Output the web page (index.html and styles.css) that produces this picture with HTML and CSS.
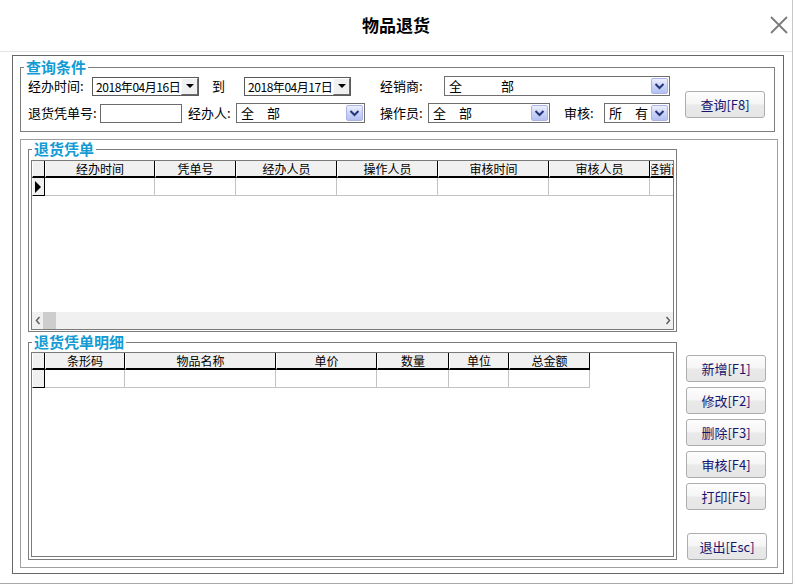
FILE: index.html
```html
<!DOCTYPE html>
<html lang="zh-CN">
<head>
<meta charset="utf-8">
<title>物品退货</title>
<link rel="stylesheet" href="styles.css">
</head>
<body>
<div class="window">
  <div class="titlebar">
    <span class="title">物品退货</span>
    <svg class="close" width="18" height="18" viewBox="0 0 18 18"><path d="M1 1 L17 17 M17 1 L1 17" stroke="#7b7b7b" stroke-width="1.8" fill="none"/></svg>
  </div>
  <div class="frame">
    <div class="group query">
      <span class="legend">查询条件</span>
      <div class="qrows">
        <div class="qrow">
          <span class="lbl l-time">经办时间:</span>
          <div class="date"><span class="dtext">2018年04月16日</span><span class="ddbtn"></span></div>
          <span class="lbl l-to">到</span>
          <div class="date"><span class="dtext">2018年04月17日</span><span class="ddbtn"></span></div>
          <span class="lbl l-dealer">经销商:</span>
          <div class="combo c-dealer"><span class="ctext">全　　　部</span><span class="cbtn"><svg width="11" height="8" viewBox="0 0 11 8"><path d="M1.5 2 L5.5 6 L9.5 2" stroke="#24367a" stroke-width="2" fill="none"/></svg></span></div>
        </div>
        <div class="qrow">
          <span class="lbl l-no">退货凭单号:</span>
          <div class="input"></div>
          <span class="lbl l-agent">经办人:</span>
          <div class="combo c-agent"><span class="ctext">全　部</span><span class="cbtn"><svg width="11" height="8" viewBox="0 0 11 8"><path d="M1.5 2 L5.5 6 L9.5 2" stroke="#24367a" stroke-width="2" fill="none"/></svg></span></div>
          <span class="lbl l-op">操作员:</span>
          <div class="combo c-op"><span class="ctext">全　部</span><span class="cbtn"><svg width="11" height="8" viewBox="0 0 11 8"><path d="M1.5 2 L5.5 6 L9.5 2" stroke="#24367a" stroke-width="2" fill="none"/></svg></span></div>
          <span class="lbl l-audit">审核:</span>
          <div class="combo c-audit"><span class="ctext">所　有</span><span class="cbtn"><svg width="11" height="8" viewBox="0 0 11 8"><path d="M1.5 2 L5.5 6 L9.5 2" stroke="#24367a" stroke-width="2" fill="none"/></svg></span></div>
        </div>
      </div>
      <button class="btn btn-query">查询[F8]</button>
    </div>

    <div class="panel">
      <div class="lists">
        <div class="group g1">
          <span class="legend">退货凭单</span>
          <div class="grid">
            <div class="ghead">
              <span class="hc w-ind"></span>
              <span class="hc w110">经办时间</span>
              <span class="hc w81">凭单号</span>
              <span class="hc w101">经办人员</span>
              <span class="hc w101">操作人员</span>
              <span class="hc w111">审核时间</span>
              <span class="hc w101">审核人员</span>
              <span class="hc w30">经销商</span>
            </div>
            <div class="grow">
              <span class="dc ind w-ind"><span class="tri"></span></span>
              <span class="dc w110"></span>
              <span class="dc w81"></span>
              <span class="dc w101"></span>
              <span class="dc w101"></span>
              <span class="dc w111"></span>
              <span class="dc w101"></span>
              <span class="dc w30"></span>
            </div>
            <div class="hscroll">
              <span class="arrow"><svg width="6" height="9" viewBox="0 0 6 9"><path d="M4.5 1 L1.5 4.5 L4.5 8" stroke="#606060" stroke-width="1.5" fill="none"/></svg></span>
              <span class="thumb"></span>
              <span class="track"></span>
              <span class="arrow"><svg width="6" height="9" viewBox="0 0 6 9"><path d="M1.5 1 L4.5 4.5 L1.5 8" stroke="#606060" stroke-width="1.5" fill="none"/></svg></span>
            </div>
          </div>
        </div>

        <div class="group g2">
          <span class="legend">退货凭单明细</span>
          <div class="grid">
            <div class="ghead">
              <span class="hc w-ind"></span>
              <span class="hc w80">条形码</span>
              <span class="hc w151">物品名称</span>
              <span class="hc w101">单价</span>
              <span class="hc w72">数量</span>
              <span class="hc w60">单位</span>
              <span class="hc w81">总金额</span>
            </div>
            <div class="grow">
              <span class="dc ind w-ind"></span>
              <span class="dc w80"></span>
              <span class="dc w151"></span>
              <span class="dc w101"></span>
              <span class="dc w72"></span>
              <span class="dc w60"></span>
              <span class="dc w81"></span>
            </div>
          </div>
        </div>
      </div>

      <div class="actions">
        <button class="btn">新增[F1]</button>
        <button class="btn">修改[F2]</button>
        <button class="btn">删除[F3]</button>
        <button class="btn">审核[F4]</button>
        <button class="btn">打印[F5]</button>
        <button class="btn btn-exit">退出[Esc]</button>
      </div>
    </div>
  </div>
</div>
</body>
</html>
```

FILE: styles.css
```css
* { box-sizing: border-box; }

body {
  margin: 0;
  background: #fff;
  font-family: "Noto Sans CJK SC", "Liberation Sans", sans-serif;
  font-size: 13px;
  color: #000;
}

.window {
  width: 793px;
  height: 584px;
  border-right: 1px solid #c8c8c8;
  border-bottom: 1px solid #a8a8a8;
}

.titlebar {
  height: 52px;
  border-bottom: 1px solid #e3e3e3;
  display: grid;
  grid-template-columns: 1fr auto 1fr;
  align-items: center;
}

.title {
  grid-column: 2;
  font-size: 17px;
  font-weight: bold;
  line-height: 20px;
  margin-bottom: 2px;
}

.close {
  grid-column: 3;
  justify-self: end;
  margin-right: 4px;
  margin-bottom: 1px;
}

.frame {
  margin: 3px 0 0 12px;
  width: 772px;
  height: 519px;
  border: 1px solid #666;
}

.group {
  position: relative;
  border: 1px solid #7d7d7d;
}

.legend {
  position: absolute;
  top: -9px;
  left: 3px;
  padding: 0 2px;
  background: #fff;
  color: #149bd4;
  font-weight: bold;
  font-size: 15px;
  line-height: 16px;
  white-space: nowrap;
}

/* query box */
.query {
  margin: 11px 0 0 7px;
  width: 755px;
  height: 65px;
  display: flex;
  align-items: flex-start;
  padding: 8px 0 0 7px;
}

.qrows {
  display: flex;
  flex-direction: column;
  gap: 7px;
  width: 642px;
  flex: none;
}

.qrow {
  display: flex;
  align-items: center;
  height: 20px;
}

.lbl {
  flex: none;
  line-height: 20px;
  white-space: nowrap;
}
.l-time { width: 64px; }
.l-to { width: 45px; padding-left: 13px; }
.l-dealer { width: 93px; padding-left: 29px; }
.l-no { width: 72px; }
.l-agent { width: 54px; padding-left: 6px; }
.l-op { width: 63px; padding-left: 15px; }
.l-audit { width: 54px; padding-left: 14px; }

.date {
  flex: none;
  width: 107px;
  height: 19px;
  border: 1px solid #5a5a5a;
  display: flex;
  align-items: center;
  background: #fff;
}
.dtext {
  flex: 1;
  padding-left: 3px;
  font-size: 12px;
  letter-spacing: -0.45px;
  line-height: 17px;
  white-space: nowrap;
  overflow: hidden;
}
.ddbtn {
  flex: none;
  width: 17px;
  height: 17px;
  background: #f0f0f0;
  border-top: 1px solid #fff;
  border-left: 1px solid #fff;
  border-right: 1px solid #6a6a6a;
  border-bottom: 1px solid #6a6a6a;
  display: flex;
  align-items: center;
  justify-content: center;
}
.ddbtn::after {
  content: "";
  border-top: 4px solid #000;
  border-left: 4px solid transparent;
  border-right: 4px solid transparent;
}

.input {
  flex: none;
  width: 82px;
  height: 19px;
  border: 1px solid #6a6a6a;
  background: #fff;
}

.combo {
  flex: none;
  height: 20px;
  border: 1px solid #6f6f6f;
  display: flex;
  align-items: center;
  justify-content: space-between;
  padding: 0 1px 0 4px;
  background: #fff;
}
.c-dealer { width: 226px; }
.c-agent { width: 129px; }
.c-op { width: 122px; }
.c-audit { width: 66px; }

.ctext {
  line-height: 18px;
  white-space: nowrap;
}

.cbtn {
  flex: none;
  width: 17px;
  height: 16px;
  border: 1px solid #aab5e6;
  border-radius: 2px;
  background: linear-gradient(#eef0fe, #c9d2f7 55%, #b3c0f2);
  display: flex;
  align-items: center;
  justify-content: center;
}

/* buttons */
.btn {
  flex: none;
  width: 80px;
  height: 27px;
  padding: 0;
  border: 1px solid #adadad;
  border-radius: 3px;
  background: linear-gradient(#fdfdfd 0%, #f5f5f5 48%, #e9e9e9 52%, #e6e6e6 100%);
  color: #151570;
  font-family: "Noto Sans CJK SC", "Liberation Sans", sans-serif;
  font-size: 13px;
  line-height: 25px;
  text-align: center;
}

.btn-query {
  margin: 15px 0 0 15px;
}

/* lower panel */
.panel {
  margin: 7px 0 0 7px;
  width: 758px;
  height: 429px;
  border: 1px solid #a0a0a0;
  display: flex;
}

.lists {
  flex: none;
  padding: 9px 0 0 7px;
}

.g1 {
  width: 649px;
  height: 183px;
  padding: 10px 2px 0 2px;
}

.g2 {
  width: 649px;
  height: 218px;
  margin-top: 10px;
  padding: 9px 2px 0 2px;
}

.grid {
  border: 1px solid #7a7a7a;
  overflow: hidden;
  display: flex;
  flex-direction: column;
  background: #fff;
}
.g1 .grid { height: 170px; }
.g2 .grid { height: 205px; }

.ghead, .grow {
  display: flex;
  flex: none;
}

.hc {
  flex: none;
  height: 17px;
  background: #f0f0f0;
  border-left: 1px solid #fff;
  border-right: 1px solid #000;
  border-bottom: 2px solid #000;
  display: flex;
  justify-content: center;
  align-items: center;
  font-size: 12px;
  line-height: 14px;
  white-space: nowrap;
  overflow: hidden;
}

.dc {
  flex: none;
  height: 18px;
  border-right: 1px solid #c3c3c3;
  border-bottom: 1px solid #c3c3c3;
}

.ind {
  background: #f0f0f0;
  border-left: 1px solid #fff;
  border-right: 1px solid #000;
  border-bottom: 1px solid #000;
  display: flex;
  align-items: center;
  padding-left: 2px;
}

.tri {
  border-left: 6px solid #000;
  border-top: 6px solid transparent;
  border-bottom: 6px solid transparent;
}

.w-ind { width: 13px; }
.w30 { width: 30px; }
.w60 { width: 60px; }
.w72 { width: 72px; }
.w80 { width: 80px; }
.w81 { width: 81px; }
.w101 { width: 101px; }
.w110 { width: 110px; }
.w111 { width: 111px; }
.w151 { width: 151px; }

.hscroll {
  margin-top: auto;
  height: 17px;
  flex: none;
  background: #f0f0f0;
  display: flex;
  align-items: stretch;
}
.arrow {
  flex: none;
  width: 11px;
  display: flex;
  align-items: center;
  justify-content: center;
}
.thumb {
  flex: none;
  width: 13px;
  background: #cdcdcd;
}
.track { flex: 1; }

.actions {
  flex: none;
  display: flex;
  flex-direction: column;
  gap: 5px;
  margin-left: 9px;
  padding-top: 215px;
}

.btn-exit {
  margin: 18px 0 0 1px;
}
```
